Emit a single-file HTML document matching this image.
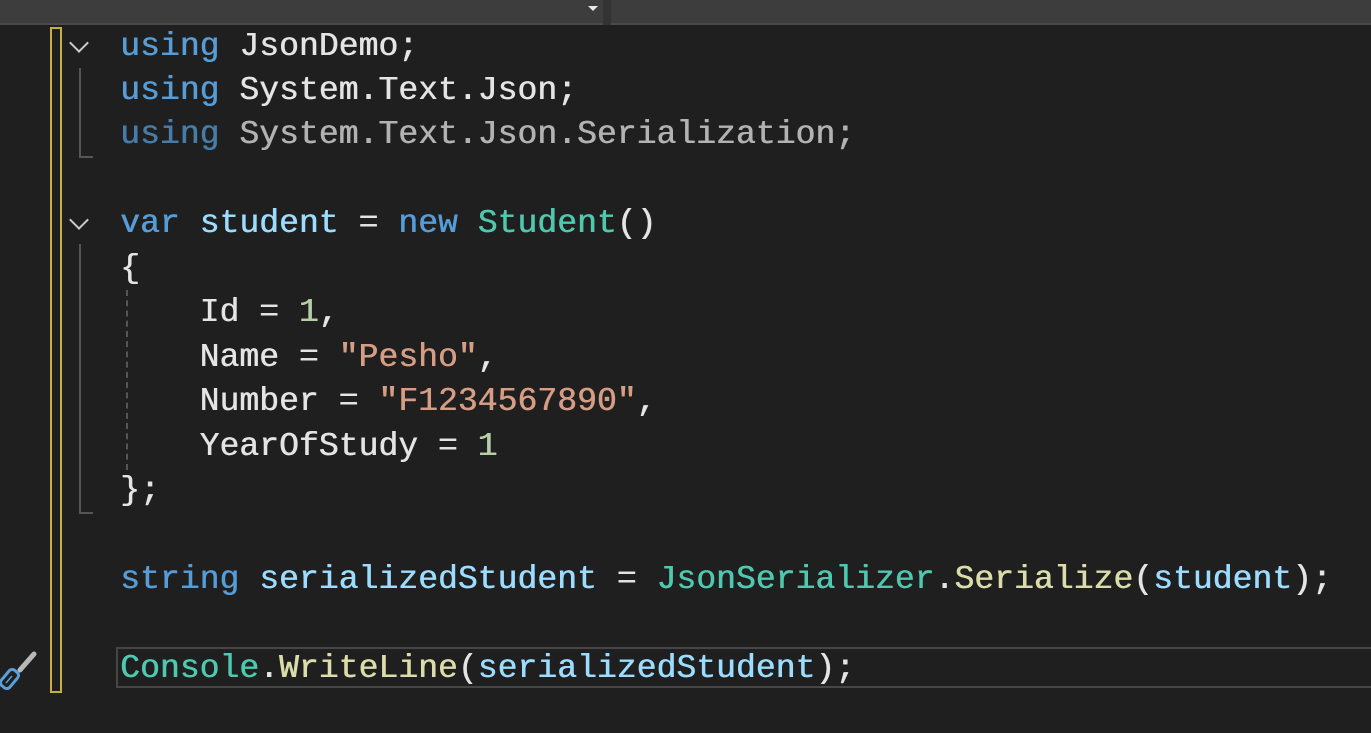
<!DOCTYPE html>
<html><head><meta charset="utf-8"><style>
html,body{margin:0;padding:0;width:1371px;height:733px;background:#1f1f1f;overflow:hidden;}
.top{position:absolute;left:0;top:0;width:1371px;height:23px;background:#3d3d3d;border-bottom:2px solid #4a4a4a;}
.sep{position:absolute;left:603px;top:0;width:8px;height:25px;background:#333;}
.arrow{position:absolute;left:588px;top:6px;width:0;height:0;border-left:5px solid transparent;border-right:5px solid transparent;border-top:5px solid #e8e8e8;}
.ybar{position:absolute;left:50px;top:27px;width:8px;height:662px;border:2px solid #c8b044;}
.cur{position:absolute;left:116px;top:647px;width:1260px;height:37px;border:2px solid #464646;}
.l{position:absolute;left:120px;font-family:"Liberation Mono",monospace;font-size:33px;line-height:44px;white-space:pre;color:#e4e4e4;letter-spacing:0.06px;text-shadow:0.6px 0 0 currentColor;}
.k{color:#569cd6}.v{color:#9cdcfe}.t{color:#4ec9b0}.m{color:#dcdcaa}.s{color:#d69d85}.n{color:#b5cea8}
.f{opacity:.75}
.guide{position:absolute;border-left:2px solid #555;border-bottom:2px solid #555;}
.dash{position:absolute;left:126px;top:290px;height:180px;border-left:2px dashed #555;}
.chev{position:absolute;left:72px;width:12px;height:12px;border-right:2px solid #ccc;border-bottom:2px solid #ccc;transform:rotate(45deg);}
</style></head><body>
<div class="top"></div><div class="sep"></div><div class="arrow"></div>
<div class="ybar"></div>
<div class="cur"></div>
<div class="chev" style="top:36px"></div>
<div class="chev" style="top:213px"></div>
<div class="guide" style="left:79px;top:68px;width:12px;height:88px"></div>
<div class="guide" style="left:79px;top:244px;width:12px;height:268px"></div>
<div class="dash"></div>
<div class="l" style="top:25px"><span class="k">using</span> JsonDemo;</div>
<div class="l" style="top:69px"><span class="k">using</span> System.Text.Json;</div>
<div class="l f" style="top:113px"><span class="k">using</span> System.Text.Json.Serialization;</div>
<div class="l" style="top:202px"><span class="k">var</span> <span class="v">student</span> = <span class="k">new</span> <span class="t">Student</span>()</div>
<div class="l" style="top:247px">{</div>
<div class="l" style="top:291px">    Id = <span class="n">1</span>,</div>
<div class="l" style="top:336px">    Name = <span class="s">"Pesho"</span>,</div>
<div class="l" style="top:380px">    Number = <span class="s">"F1234567890"</span>,</div>
<div class="l" style="top:425px">    YearOfStudy = <span class="n">1</span></div>
<div class="l" style="top:469px">};</div>
<div class="l" style="top:558px"><span class="k">string</span> <span class="v">serializedStudent</span> = <span class="t">JsonSerializer</span>.<span class="m">Serialize</span>(<span class="v">student</span>);</div>
<div class="l" style="top:647px"><span class="t">Console</span>.<span class="m">WriteLine</span>(<span class="v">serializedStudent</span>);</div>
<svg style="position:absolute;left:0;top:646px" width="40" height="46" viewBox="0 0 40 46">
<line x1="20" y1="24" x2="34" y2="8" stroke="#b8b8b8" stroke-width="5" stroke-linecap="round"/>
<rect x="4" y="23" width="11" height="20" rx="4" transform="rotate(40 9.5 33)" fill="none" stroke="#5a9fd8" stroke-width="3"/>
<line x1="6" y1="37" x2="12" y2="30" stroke="#5a9fd8" stroke-width="1.5"/>
</svg>
</body></html>
